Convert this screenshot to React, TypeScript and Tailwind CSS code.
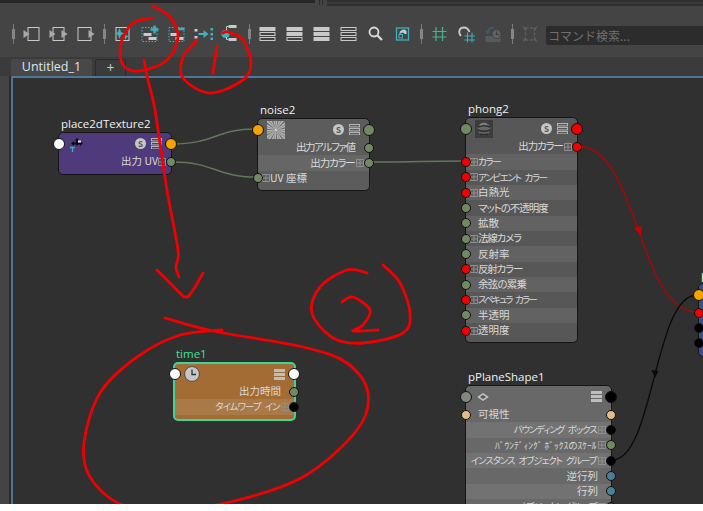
import React from "react";

type Pt = [number, number];

// freehand strokes: catmull-rom through hand-picked points
const smooth = (p: Pt[]) => {
  let d = `M${p[0][0]} ${p[0][1]}`;
  for (let i = 0; i < p.length - 1; i++) {
    const a = p[i - 1] || p[i];
    const b = p[i];
    const c = p[i + 1];
    const e = p[i + 2] || c;
    d += ` C${b[0] + (c[0] - a[0]) / 6} ${b[1] + (c[1] - a[1]) / 6} ${c[0] - (e[0] - b[0]) / 6} ${c[1] - (e[1] - b[1]) / 6} ${c[0]} ${c[1]}`;
  }
  return d;
};

const strokes: Pt[][] = [
  [[153, 6], [170, 17], [178, 37], [167, 60], [140, 71], [123, 65], [121, 43], [133, 23], [152, 18]],
  [[144, 60], [148, 80], [155, 110], [167, 190], [178, 250], [176, 267], [179, 277]],
  [[157, 270], [170, 283], [185, 297], [193, 290], [203, 273]],
  [[197, 40], [183, 57], [183, 78], [210, 93], [243, 80], [251, 63], [243, 40], [228, 32], [223, 33]],
  [[217, 46], [213, 73]],
  [[367, 273], [347, 270], [320, 287], [312, 313], [333, 338], [363, 343], [403, 333], [410, 313], [400, 283], [383, 265]],
  [[342, 302], [353, 297], [370, 310], [363, 325], [353, 331], [378, 330]],
  [[165, 318], [213, 331], [303, 347], [347, 363], [368, 393], [357, 430], [303, 477], [230, 502], [165, 510], [120, 504], [90, 477], [84, 443], [100, 393], [137, 357], [180, 335], [222, 330]],
];

const C = {
  orange: "bg-[#f5a300]",
  green: "bg-[#6f8a63]",
  red: "bg-[#f00000]",
  white: "bg-white",
  black: "bg-black",
  tan: "bg-[#e2bb8c]",
  teal: "bg-[#4a7f96]",
  sage: "bg-[#82897a]",
};

const Port = ({ color, big, side }: { color: string; big?: boolean; side: "l" | "r" }) => (
  <span
    className={`absolute top-1/2 -translate-y-1/2 rounded-full border border-[#111] ${color} ${big ? "h-3 w-3" : "h-2.5 w-2.5"} ${
      side === "l" ? (big ? "-left-1.5" : "-left-[5px]") : big ? "-right-1.5" : "-right-[5px]"
    }`}
  />
);

const GridMark = ({ side }: { side: "l" | "r" }) => (
  <svg
    viewBox="0 0 8 8"
    className={`absolute top-1/2 h-2 w-2 -translate-y-1/2 ${side === "l" ? "left-1" : "right-[5px]"}`}
    fill="none"
    stroke="#8e8e8e"
    strokeWidth="1"
  >
    <path d="M.5.5h7v7h-7zM4 .5v7M.5 4h7" />
  </svg>
);

type Row = { t: string; r?: boolean; lp?: string; rp?: string; g?: boolean; on?: boolean; cls?: string };

const NodeRow = ({ row, stripe }: { row: Row; stripe: string }) => (
  <div
    className={`relative flex h-[15.33px] items-center whitespace-nowrap pl-3 pr-[13px] ${row.r ? "justify-end" : "justify-start"} ${
      row.on ? stripe : ""
    }`}
  >
    {row.g && <GridMark side={row.r ? "r" : "l"} />}
    <span className={`leading-none text-[#d9d9d9] [font-feature-settings:'palt'] ${row.cls || "text-[10.5px]"} ${row.r && row.cls ? "mr-[1.5px]" : ""}`}>
      {row.t}
    </span>
    {row.lp && <Port color={row.lp} side="l" />}
    {row.rp && <Port color={row.rp} side="r" />}
  </div>
);

const SBadge = () => (
  <span className="flex h-[11px] w-[11px] items-center justify-center rounded-full bg-[#c6c6c6] text-[8px] font-bold leading-none text-[#555]">
    S
  </span>
);

const StackIcon = ({ filled }: { filled?: boolean }) => (
  <svg viewBox="0 0 11 11" className="h-[11px] w-[11px]">
    {[0, 4, 8].map((y) =>
      filled ? (
        <rect key={y} x="0" y={y} width="11" height="3" fill="#bdbdbd" />
      ) : (
        <rect key={y} x=".5" y={y + 0.5} width="10" height="2.4" fill="none" stroke="#b5b5b5" />
      )
    )}
  </svg>
);

const NoiseThumb = () => {
  const rays = Array.from({ length: 44 }, (_, i) => (i / 44) * Math.PI * 2);
  return (
    <svg viewBox="-9 -9 18 18" className="h-[18px] w-[18px] bg-[#b9b9b9]">
      {rays.map((a, i) =>
        i % 2 ? null : (
          <path
            key={i}
            d={`M0 0L${14 * Math.cos(a)} ${14 * Math.sin(a)}L${14 * Math.cos(a + 0.14)} ${14 * Math.sin(a + 0.14)}Z`}
            fill={i % 4 ? "#6a6a6a" : "#8c8c8c"}
          />
        )
      )}
      <circle r="1" fill="#ddd" />
    </svg>
  );
};

const PhongThumb = () => (
  <svg viewBox="0 0 18 18" className="h-[18px] w-[18px] bg-[#3c3c3c]">
    <circle cx="9" cy="9" r="6.5" fill="#666" />
    <path d="M3 7c4-1.5 8-1.5 12 0M2.6 10c4 1.500 9 1.500 12.800 0M5 14c3 .8 5 .8 8 0" stroke="#2c2c2c" strokeWidth="1.400" fill="none" />
    <path d="M5 5c2-1.500 5-1.500 7-.5" stroke="#989898" strokeWidth="1" fill="none" />
  </svg>
);

const PlaceIcon = () => (
  <svg viewBox="0 0 20 18" className="h-[18px] w-5">
    <path d="M9 3l2.500 2.500h-1.500v2h2v-1.500l3 2.500-3 2.500v-1.500h-2v1h-2v-1h-2v1.500l-3-2.500 3-2.500v1.500h2v-2h-1.500z" fill="#0c0c0c" />
    <path d="M10 5.500h3v2h-3z" fill="#e8e8e8" />
    <path d="M2 12.500h5M4.500 12.500v4.500" stroke="#3bb0b8" strokeWidth="1.300" fill="none" />
  </svg>
);

const Clock = () => (
  <svg viewBox="0 0 16 16" className="h-4 w-4">
    <circle cx="8" cy="8" r="7.400" fill="#c6c6c6" stroke="#3c3c3c" strokeWidth=".8" />
    <path d="M8 3.500V8.500H12" stroke="#333" strokeWidth="1.300" fill="none" />
  </svg>
);

const PlaneIcon = () => (
  <svg viewBox="0 0 14 10" className="ml-px h-2.5 w-3.5">
    <path d="M7 .5L13.500 5 7 9.500.5 5z" fill="#bdbdbd" stroke="#444" strokeWidth=".5" />
    <path d="M7 3L10 5 7 7 4 5z" fill="#555" />
  </svg>
);

type NodeProps = {
  x: number;
  y: number;
  w: number;
  h: number;
  title: string;
  titleCls?: string;
  bg: string;
  stripe?: string;
  border?: string;
  headH?: string;
  icon?: React.ReactNode;
  badge?: boolean;
  filled?: boolean;
  lp?: string;
  rp?: string;
  rows: Row[];
};

const GraphNode = (n: NodeProps) => (
  <div className="absolute" style={{ left: n.x, top: n.y, width: n.w, height: n.h }}>
    <div className={`absolute -top-[17px] left-[3px] whitespace-nowrap font-['Open_Sans',sans-serif] text-[11.5px] leading-[18px] ${n.titleCls || "text-[#f0f0f0]"}`}>
      {n.title}
    </div>
    <div className={`h-full w-full rounded-[5px] border ${n.border || "border-[#151515]"} ${n.bg}`}>
      <div className={`relative flex items-center pl-[9px] pr-[9px] ${n.headH || "h-[21px]"}`}>
        {n.lp && <Port color={n.lp} big side="l" />}
        {n.icon}
        <div className="ml-auto flex items-center gap-[5px]">
          {n.badge && <SBadge />}
          <StackIcon filled={n.filled} />
        </div>
        {n.rp && <Port color={n.rp} big side="r" />}
      </div>
      {n.rows.map((r) => (
        <NodeRow key={r.t} row={r} stripe={n.stripe || ""} />
      ))}
    </div>
  </div>
);

const Handle = () => (
  <div className="relative flex h-5 w-2.5 shrink-0 justify-center">
    <span className="h-5 w-px bg-[#7a7a7a]" />
    <span className="absolute top-[5px] h-2.5 w-[3px] bg-[#858585]" />
  </div>
);

const Cell = ({ children }: { children: React.ReactNode }) => (
  <svg viewBox="0 0 27 20" className="h-5 w-[27px] shrink-0" fill="none">
    <g transform="translate(3.500 0)">{children}</g>
  </svg>
);

const Tri = ({ x }: { x: number }) => <path d={`M${x} 6l6 4-6 4z`} fill="#a9a9a9" />;
const G = "#c9c9c9";
const CY = "#3fb0bd";

const Dotted = ({ children }: { children: React.ReactNode }) => (
  <>
    <rect x="2.500" y="3.500" width="15" height="14" stroke={CY} strokeDasharray="1.500 1.500" />
    <rect x="4" y="9" width="8" height="3" fill={G} />
    <rect x="9" y="13" width="8" height="3" fill={G} />
    {children}
  </>
);

const Stack = ({ fill }: { fill: number }) => (
  <Cell>
    {[3, 8, 13].map((y, i) =>
      i < fill ? (
        <rect key={y} x="2" y={y} width="16" height="4" rx=".5" fill={G} />
      ) : (
        <rect key={y} x="2.500" y={y + 0.5} width="15" height="3" stroke={G} />
      )
    )}
  </Cell>
);

const Toolbar = () => (
  <div className="flex h-[50px] items-center bg-[#444444] pl-2 pt-1 pr-0">
    <Handle />
    <Cell>
      <rect x="6.500" y="3.500" width="11" height="13" stroke={G} />
      <Tri x={2} />
    </Cell>
    <Cell>
      <rect x="4.500" y="3.500" width="11" height="13" stroke={G} />
      <Tri x={1} />
      <Tri x={13} />
    </Cell>
    <Cell>
      <rect x="2.500" y="3.500" width="13" height="13" stroke={G} />
      <Tri x={13} />
    </Cell>
    <Handle />
    <Cell>
      <rect x="3.500" y="3.500" width="13" height="13" stroke={G} />
      <path d="M7 4l1.500 4 3.500 1.500-3.500 1.500-1.500 4-1.500-4-3-1.500 3-1.500z" fill={CY} />
      <path d="M13 9l1 2.500 2.500 1-2.500 1-1 2.500-1-2.500-2.500-1 2.500-1z" fill={CY} />
    </Cell>
    <Cell>
      <Dotted>
        <path d="M11 5.500h8M15 1.500v8" stroke={CY} strokeWidth="2.500" />
      </Dotted>
    </Cell>
    <Cell>
      <Dotted>
        <path d="M10 5h8" stroke={CY} strokeWidth="2.500" />
      </Dotted>
    </Cell>
    <Cell>
      <rect x="1" y="5" width="3" height="2.500" fill={G} />
      <rect x="1" y="12" width="3" height="2.500" fill={G} />
      <path d="M5 9h5V6l5 4-5 4v-3H5z" fill={CY} />
      <rect x="17" y="4" width="2.500" height="2.500" fill={CY} />
      <rect x="17" y="9" width="2.500" height="2.500" fill={CY} />
      <rect x="17" y="13.500" width="2.500" height="2.500" fill={CY} />
    </Cell>
    <Cell>
      <circle cx="5" cy="10" r="4" fill={CY} />
      <rect x="8" y="1" width="8" height="3" fill={G} />
      <rect x="8" y="14" width="8" height="3" fill={G} />
      <path d="M8 2.500H6V6M8 15.500H6V13" stroke={G} />
    </Cell>
    <Handle />
    <Stack fill={1} />
    <Stack fill={2} />
    <Stack fill={3} />
    <Stack fill={0} />
    <Cell>
      <circle cx="8.500" cy="8" r="4.500" stroke="#dcdcdc" strokeWidth="1.800" />
      <path d="M12 11.500l4.500 4.500" stroke="#dcdcdc" strokeWidth="2.200" />
    </Cell>
    <Cell>
      <rect x="4" y="4" width="12" height="12" stroke={CY} strokeWidth="1.300" />
      <path d="M7 10a4 4 0 0 1 7-3v3h-2a2 2 0 0 0-2-1.500z" fill={G} />
      <rect x="6.500" y="10.500" width="3.500" height="3.500" stroke={CY} />
    </Cell>
    <Handle />
    <Cell>
      <path d="M6.500 3v14M13 3v14M3 7.500h14M3 13h14" stroke="#4ab48c" strokeWidth="1.200" />
    </Cell>
    <Cell>
      <path d="M4.500 12C1 8 3 3.500 7.500 3.500C10 3.500 12 5.500 13 8" stroke={G} strokeWidth="1.800" />
      <path d="M11 8.500v10M15.500 8.500v10M8 12h10.500M8 16h10.500" stroke={CY} strokeWidth="1" />
    </Cell>
    <Cell>
      <rect x="2" y="12" width="15" height="6" fill="#565b5c" />
      <circle cx="13" cy="10" r="4.500" fill="#5d6263" stroke="#444" />
      <path d="M13 7.500V10.500H15.500" stroke="#3a3a3a" />
      <path d="M4 10a5 5 0 0 1 6-6" stroke="#3d5a66" strokeWidth="2.200" />
      <path d="M1.500 7l5 0-2.500 4z" fill="#3d5a66" />
    </Cell>
    <Handle />
    <Cell>
      <path d="M5 4h9M5 16h9M5 4v12M14 4v12" stroke="#5e5e5e" strokeDasharray="3 1.500" strokeWidth="1.400" />
      <path d="M2 2l4 2-2 2zM17 2l-4 2 2 2zM2 18l4-2-2-2zM17 18l-4-2 2-2z" fill="#5e5e5e" />
    </Cell>
    <div className="ml-0.5 mt-[3px] flex h-[19px] flex-1 items-center rounded-l-[2px] bg-[#2c2c2c] pl-0.5 font-['Noto_Sans_CJK_JP',sans-serif] text-[12px] text-[#6f6f6f]">
      コマンド検索...
    </div>
  </div>
);

const Tabs = () => (
  <div className="flex h-[19px] items-end bg-[#3b3b3b] pl-[11px] font-['Open_Sans',sans-serif]">
    <div className="flex h-[17px] w-[81px] items-center justify-center rounded-t-[3px] bg-[#484848] text-[12.500px] leading-none text-[#dfe6ea]">
      Untitled_1
    </div>
    <div className="ml-[3px] flex h-[17px] w-[31px] items-center justify-center rounded-t-[3px] border border-b-0 border-[#2b2b2b] text-[14px] leading-none text-[#c8c8c8]">
      +
    </div>
  </div>
);

const placeRows: Row[] = [{ t: "出力 UV", r: true, g: true, rp: C.green }];
const noiseRows: Row[] = [
  { t: "出力アルファ値", r: true, rp: C.green, cls: "text-[10.5px] tracking-[-1.4px]" },
  { t: "出力カラー", r: true, g: true, rp: C.green, on: true, cls: "text-[10.5px] tracking-[-1.2px]" },
  { t: "UV 座標", g: true, lp: C.green },
];
const phongRows: Row[] = [
  { t: "出力カラー", r: true, g: true, rp: C.red, cls: "text-[10.5px] tracking-[-1.2px]" },
  { t: "カラー", g: true, lp: C.red, on: true, cls: "text-[9.5px] tracking-[-1.3px]" },
  { t: "アンビエント カラー", g: true, lp: C.red, cls: "text-[9.5px] tracking-[-1.3px] [word-spacing:3px]" },
  { t: "白熱光", g: true, lp: C.red, on: true },
  { t: "マットの不透明度", lp: C.green, cls: "text-[10.5px] tracking-[-1px]" },
  { t: "拡散", lp: C.green, on: true },
  { t: "法線カメラ", g: true, lp: C.green, cls: "text-[10.5px] tracking-[-1.2px]" },
  { t: "反射率", lp: C.green, on: true },
  { t: "反射カラー", g: true, lp: C.red, cls: "text-[10.5px] tracking-[-1.2px]" },
  { t: "余弦の累乗", lp: C.green, on: true, cls: "text-[10.5px] tracking-[-.8px]" },
  { t: "スペキュラ カラー", g: true, lp: C.red, cls: "text-[9.5px] tracking-[-1.8px] [word-spacing:3px]" },
  { t: "半透明", lp: C.green, on: true },
  { t: "透明度", g: true, lp: C.red },
];
const timeRows: Row[] = [
  { t: "出力時間", r: true, rp: C.green },
  { t: "タイムワープ イン", r: true, g: true, rp: C.black, on: true, cls: "text-[9.5px] tracking-[-1px] [word-spacing:3px]" },
];
const planeRows: Row[] = [
  { t: "可視性", lp: C.tan, rp: C.tan },
  { t: "バウンディング ボックス", r: true, g: true, rp: C.black, on: true, cls: "text-[9.5px] tracking-[-1.2px] [word-spacing:3px]" },
  { t: "ﾊﾞｳﾝﾃﾞｨﾝｸﾞ ﾎﾞｯｸｽのｽｹｰﾙ", r: true, g: true, rp: C.green, cls: "text-[9.5px]" },
  { t: "インスタンス オブジェクト グループ", r: true, g: true, rp: C.black, on: true, cls: "text-[9.5px] tracking-[-1.1px] [word-spacing:3px]" },
  { t: "逆行列", r: true, rp: C.teal },
  { t: "行列", r: true, rp: C.teal, on: true },
  { t: "オブジェクト グループ", r: true, g: true, rp: C.red, cls: "text-[9.5px] tracking-[-1.1px] [word-spacing:3px]" },
];
const sgRows: Row[] = [
  { t: " ", lp: C.red },
  { t: "  ", lp: C.black },
  { t: "   ", lp: C.black },
];

const Graph = () => (
  <div className="absolute left-0 top-0 h-[504px] w-[703px] overflow-hidden font-['Noto_Sans_CJK_JP',sans-serif]">
    <svg viewBox="0 0 703 504" className="absolute left-0 top-0 h-[504px] w-[703px]" fill="none">
      <path d="M172 144C215 144 215 129 257 129" stroke="#62785a" strokeWidth="1.500" />
      <path d="M172 162C215 162 215 177 257 177" stroke="#62785a" strokeWidth="1.500" />
      <path d="M370 162C420 162 420 161 465 161" stroke="#62785a" strokeWidth="1.500" />
      <path d="M578 146C638 146 638 312 697 312" stroke="#b80000" strokeWidth="1.300" />
      <path d="M634 228l8 -2-1 9z" fill="#c40000" />
      <path d="M612 460C654 460 654 295 697 295" stroke="#0a0a0a" strokeWidth="1.300" />
      <path d="M655 370l3.500 8-7-1z" fill="#0a0a0a" transform="rotate(180 655 374)" />
    </svg>
    <GraphNode x={58} y={132} w={114} h={43} title="place2dTexture2" bg="bg-[#4f3a7b]" icon={<PlaceIcon />} badge lp={C.white} rp={C.orange} rows={placeRows} />
    <GraphNode x={257} y={118} w={113} h={73} title="noise2" bg="bg-[#5c5c5c]" stripe="bg-[#666666]" icon={<NoiseThumb />} badge lp={C.orange} rp={C.green} rows={noiseRows} />
    <GraphNode x={465} y={117} w={113} h={226} title="phong2" bg="bg-[#575757]" stripe="bg-[#626262]" icon={<PhongThumb />} badge lp={C.green} rp={C.red} rows={phongRows} />
    <GraphNode x={173} y={362} w={123} h={59} title="time1" titleCls="text-[#3fe09a]" bg="bg-[#a46c35]" stripe="bg-[#a97a47]" border="border-2 border-[#3fd592]" headH="h-5" icon={<Clock />} filled lp={C.white} rp={C.white} rows={timeRows} />
    <GraphNode x={465} y={385} w={147} h={140} title="pPlaneShape1" bg="bg-[#686868]" stripe="bg-[#727272]" icon={<PlaneIcon />} filled lp={C.sage} rp={C.black} rows={planeRows} />
    <GraphNode x={698} y={283} w={120} h={74} title="phong2SG" titleCls="text-[#d4ffe8]" bg="bg-[#3a4f88]" lp={C.orange} rows={sgRows} />
    <svg viewBox="0 0 703 504" className="pointer-events-none absolute left-0 top-0 h-[504px] w-[703px]" fill="none">
      {strokes.map((s, i) => (
        <path key={i} d={smooth(s)} stroke="#f00000" strokeWidth="2.800" strokeLinecap="round" strokeLinejoin="round" />
      ))}
    </svg>
  </div>
);

export default function App() {
  return (
    <div className="relative h-[511px] w-[703px] overflow-hidden bg-white">
      <div className="flex h-[504px] flex-col bg-[#444444]">
        <div className="flex h-[7px] bg-[#444444]">
          <div className="h-[3px] w-[315px] bg-[#272727]" />
          <div className="ml-1 h-[5px] w-1 border-x border-[#2c2c2c]" />
          <div className="ml-1 h-[6px] flex-1 border-y-2 border-[#303030] bg-[#3a3a3a]" />
        </div>
        <Toolbar />
        <Tabs />
        <div className="ml-[9px] flex-1 border-l-2 border-[#2a2a2a]">
          <div className="h-full border-l-2 border-t-2 border-[#4f7594] bg-[#303030]" />
        </div>
      </div>
      <Graph />
    </div>
  );
}
